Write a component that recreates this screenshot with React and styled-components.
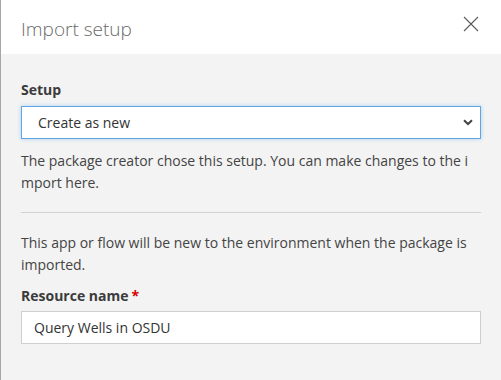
import styled, { createGlobalStyle } from "styled-components"

const GlobalStyle = createGlobalStyle`
  html, body {
    margin: 0;
    padding: 0;
    background: #f3f3f3;
  }
  body {
    font-family: "Open Sans", "Noto Sans", sans-serif;
  }
`

const Panel = styled.div`
  width: 501px;
  height: 380px;
  box-sizing: border-box;
  border-left: 1px solid #a6a6a6;
  background: #f3f3f3;
  display: flex;
  flex-direction: column;
`

const Header = styled.div`
  height: 54px;
  background: #ffffff;
  display: flex;
  align-items: center;
  justify-content: space-between;
  padding: 0 22px 0 20px;
`

const Title = styled.h1`
  margin: 0;
  font-size: 19px;
  font-weight: 300;
  color: #6b6b6b;
  padding-top: 3px;
`

const CloseButton = styled.button`
  border: none;
  background: none;
  padding: 0;
  width: 16px;
  height: 16px;
  margin-bottom: 6px;
  display: flex;
  cursor: pointer;
`

const Body = styled.div`
  padding: 26px 20px 0 20px;
  display: flex;
  flex-direction: column;
`

const Label = styled.label`
  font-size: 14px;
  font-weight: 700;
  color: #3b3b3b;
  line-height: 20px;
  margin-bottom: ${p => p.$gap || 5}px;
`

const Required = styled.span`
  color: #d40000;
  margin-left: 3px;
`

const SelectBox = styled.div`
  height: 33px;
  box-sizing: border-box;
  background: #fff;
  border: 1px solid #5ea6e6;
  box-shadow: 0 0 4px rgba(94, 166, 230, 0.45);
  display: flex;
  align-items: center;
  justify-content: space-between;
  padding: 0 7px 0 16px;
  font-size: 14px;
  color: #333;
`

const Text = styled.p`
  margin: ${p => p.$margin || "0"};
  font-size: 14px;
  line-height: 22px;
  color: #444;
  word-break: ${p => (p.$breakAll ? "break-all" : "normal")};
`

const Divider = styled.hr`
  border: none;
  border-top: 1px solid #d2d2d2;
  margin: 18px 0 19px 0;
`

const TextBox = styled.div`
  height: 33px;
  box-sizing: border-box;
  background: #fff;
  border: 1px solid #cfcfcf;
  display: flex;
  align-items: center;
  padding: 0 12px;
  font-size: 14px;
  color: #333;
`

function App() {
  return (
    <>
      <GlobalStyle />
      <Panel>
        <Header>
          <Title>Import setup</Title>
          <CloseButton aria-label="Close">
            <svg width="16" height="16" viewBox="0 0 16 16">
              <path d="M1 1 L15 15 M15 1 L1 15" stroke="#5a5a5a" strokeWidth="1.1" fill="none" />
            </svg>
          </CloseButton>
        </Header>
        <Body>
          <Label $gap={6}>Setup</Label>
          <SelectBox>
            <span>Create as new</span>
            <svg width="10" height="7" viewBox="0 0 10 7">
              <path d="M1 1.2 L5 5 L9 1.2" stroke="#444" strokeWidth="2" fill="none" />
            </svg>
          </SelectBox>
          <Text $breakAll $margin="11px 0 0 0">
            The package creator chose this setup. You can make changes to the import here.
          </Text>
          <Divider />
          <Text $margin="0 0 10px 0">
            This app or flow will be new to the environment when the package is imported.
          </Text>
          <Label $gap={5}>
            Resource name<Required>*</Required>
          </Label>
          <TextBox>Query Wells in OSDU</TextBox>
        </Body>
      </Panel>
    </>
  )
}

export default App
